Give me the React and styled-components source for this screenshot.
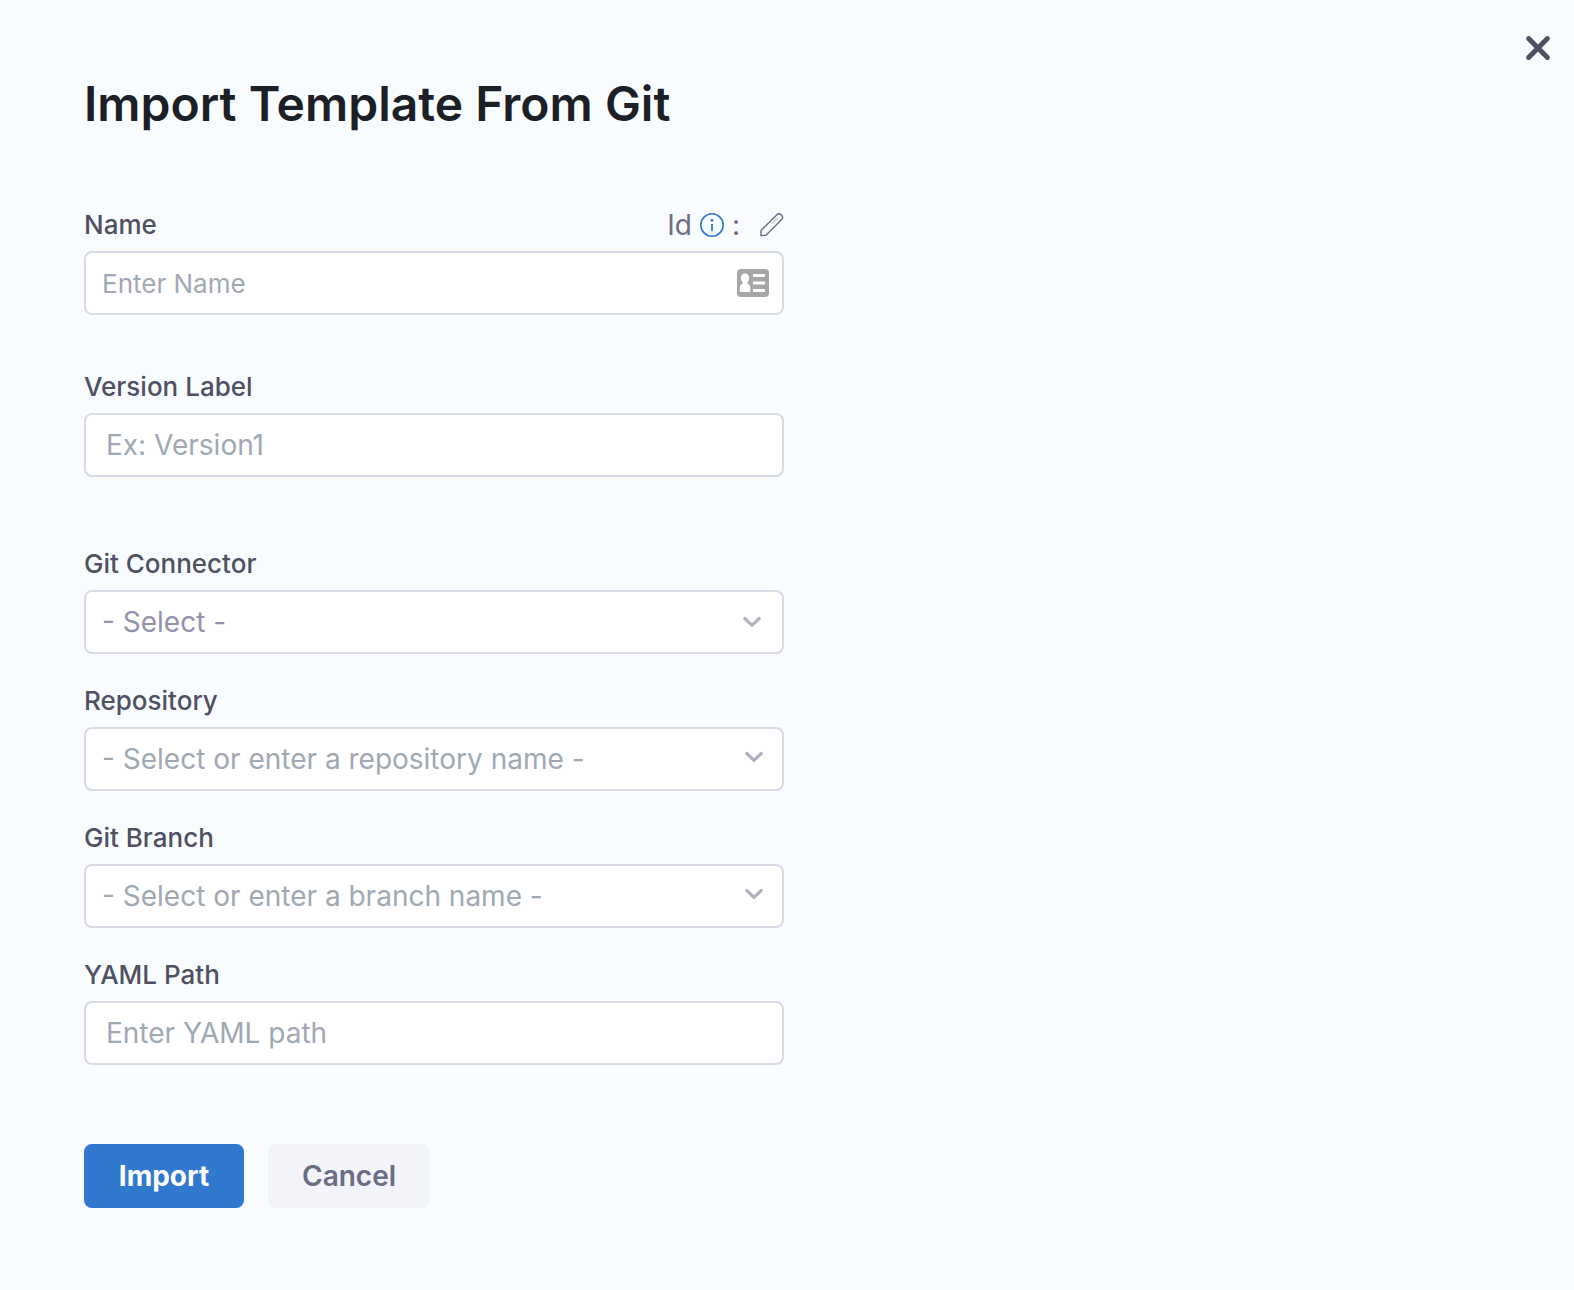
import React from "react";
import styled, { createGlobalStyle } from "styled-components";

const GlobalStyle = createGlobalStyle`
  *, *::before, *::after { box-sizing: border-box; }
  body {
    margin: 0;
    background: #f9fcff;
    color: #4f5162;
    font-family: Inter, "Liberation Sans", sans-serif;
  }
  input, select, button { font-family: inherit; }
`;

const Dialog = styled.main`
  display: flex;
  align-items: flex-start;
  justify-content: space-between;
  min-height: 100vh;
  padding: 32px 20px 32px 84px;
`;

const Content = styled.div`
  flex: 1;
  max-width: 700px;
  padding-top: 44px;
`;

const Title = styled.h1`
  margin: 0 0 77px;
  color: #1c1f26;
  font-size: 48px;
  font-weight: 600;
  line-height: 56px;
`;

const IconButton = styled.button`
  display: flex;
  padding: 0;
  border: 0;
  background: none;
  color: inherit;
  cursor: pointer;
`;

const Form = styled.form`
  display: flex;
  flex-direction: column;
`;

const Field = styled.div`
  display: flex;
  flex-direction: column;
  gap: 10px;
  margin-bottom: ${(p) => p.$space || 31}px;
`;

const FieldHead = styled.div`
  display: flex;
  align-items: center;
  justify-content: space-between;
  height: 32px;
`;

const Label = styled.label`
  font-size: 26px;
  font-weight: 500;
  line-height: 32px;
`;

const IdGroup = styled.div`
  display: flex;
  align-items: center;
  gap: 8px;
  color: #6b6d85;
  font-size: 28px;
  line-height: 32px;
`;

const IdEdit = styled(IconButton)`
  margin-left: 12px;
`;

const Shell = styled.div`
  display: grid;
  align-items: center;
  height: 64px;
  border: 2px solid #d9dae5;
  border-radius: 8px;
  background: #fff;
  overflow: hidden;

  & > * { grid-area: 1 / 1; }
  &:focus-within { border-color: #3178cf; }
`;

const TextBox = styled.input`
  width: 100%;
  height: 60px;
  padding: 0 ${(p) => p.$pad || 16}px;
  border: 0;
  outline: 0;
  background: transparent;
  color: #22272d;
  font-size: ${(p) => p.$size || 28}px;

  &::placeholder { color: #9fa9b3; opacity: 1; }
`;

const SelectBox = styled.select`
  width: 100%;
  height: 60px;
  padding: 0 16px;
  border: 0;
  outline: 0;
  appearance: none;
  background: transparent;
  color: #9293ab;
  font-size: 28px;
`;

const Adornment = styled.span`
  display: flex;
  justify-self: end;
  margin-right: ${(p) => p.$right}px;
  padding-bottom: ${(p) => p.$lift || 0}px;
  color: ${(p) => p.$color || "#b0b1c3"};
  pointer-events: none;
`;

const Actions = styled.div`
  display: flex;
  gap: 24px;
  margin-top: 48px;
`;

const Button = styled.button`
  min-width: 160px;
  height: 64px;
  padding: 0 34px;
  border: 0;
  border-radius: 8px;
  background: ${(p) => (p.$primary ? "#3178cf" : "#f3f3fa")};
  color: ${(p) => (p.$primary ? "#fff" : "#6b6d85")};
  font-size: 28px;
  font-weight: ${(p) => (p.$primary ? 700 : 600)};
  cursor: pointer;
`;

const Chevron = () => (
  <svg width="18" height="12" viewBox="0 0 18 12" fill="none" aria-hidden="true">
    <path d="M1.800 2.500 9 9.300l7.200-6.800" stroke="currentColor" strokeWidth="3.200" strokeLinecap="round" strokeLinejoin="round" />
  </svg>
);

const Cross = () => (
  <svg width="32" height="32" viewBox="0 0 32 32" fill="none" aria-hidden="true">
    <path d="M6.600 6.600l18.800 18.800M25.400 6.600 6.600 25.400" stroke="currentColor" strokeWidth="5" strokeLinecap="round" />
  </svg>
);

const Info = () => (
  <svg width="24" height="24" viewBox="0 0 24 24" fill="none" aria-hidden="true">
    <circle cx="12" cy="12" r="11.200" stroke="#3178cf" strokeWidth="1.600" />
    <circle cx="12" cy="7.300" r="1.400" fill="#3178cf" />
    <path d="M12 11v7" stroke="#3178cf" strokeWidth="1.800" />
  </svg>
);

const Pencil = () => (
  <svg width="24" height="24" viewBox="0 0 24 24" fill="none" aria-hidden="true">
    <path d="M1 22.600v-5L16.600 2a3.400 3.400 0 0 1 4.800 0 3.400 3.400 0 0 1 0 4.800L6 22.200Z" stroke="#6b6d85" strokeWidth="1.400" strokeLinejoin="round" />
    <path d="m12 10.500 5.500-5.500" stroke="#d5d6df" strokeWidth="2.400" />
  </svg>
);

const ContactCard = () => (
  <svg width="32" height="28" viewBox="0 0 32 28" aria-hidden="true">
    <rect width="32" height="28" rx="4" fill="currentColor" />
    <path d="M8 4.600c2.500 0 4.200 1.900 4.200 4.400 0 1.900-.7 3.400-1.800 4.300v1.200c2 .7 2.900 2 2.900 4.500v4H2.800v-4c0-2.500.9-3.800 2.900-4.500v-1.200C4.600 12.400 3.800 10.900 3.800 9c0-2.500 1.700-4.400 4.200-4.400Z" fill="#fff" />
    <path d="M16 6.500h12M16 14h12M16 21.500h12" stroke="#fff" strokeWidth="3" />
  </svg>
);

export default function App() {
  return (
    <>
      <GlobalStyle />
      <Dialog>
        <Content>
          <Title>Import Template From Git</Title>
          <Form onSubmit={(e) => e.preventDefault()}>
            <Field $space={56}>
              <FieldHead>
                <Label htmlFor="name">Name</Label>
                <IdGroup>
                  <span>Id</span>
                  <Info />
                  <span>:</span>
                  <IdEdit type="button" aria-label="Edit Id">
                    <Pencil />
                  </IdEdit>
                </IdGroup>
              </FieldHead>
              <Shell>
                <TextBox id="name" $size={26} placeholder="Enter Name" />
                <Adornment $right={13} $color="#a6a6a6">
                  <ContactCard />
                </Adornment>
              </Shell>
            </Field>
            <Field $space={71}>
              <Label htmlFor="version">Version Label</Label>
              <Shell>
                <TextBox id="version" $pad={20} placeholder="Ex: Version1" />
              </Shell>
            </Field>
            <Field>
              <Label htmlFor="connector">Git Connector</Label>
              <Shell>
                <SelectBox id="connector" defaultValue="">
                  <option value="">- Select -</option>
                </SelectBox>
                <Adornment $right={21}>
                  <Chevron />
                </Adornment>
              </Shell>
            </Field>
            <Field>
              <Label htmlFor="repository">Repository</Label>
              <Shell>
                <TextBox id="repository" role="combobox" aria-expanded="false" placeholder="- Select or enter a repository name -" />
                <Adornment $right={19} $lift={4}>
                  <Chevron />
                </Adornment>
              </Shell>
            </Field>
            <Field>
              <Label htmlFor="branch">Git Branch</Label>
              <Shell>
                <TextBox id="branch" role="combobox" aria-expanded="false" placeholder="- Select or enter a branch name -" />
                <Adornment $right={19} $lift={4}>
                  <Chevron />
                </Adornment>
              </Shell>
            </Field>
            <Field>
              <Label htmlFor="path">YAML Path</Label>
              <Shell>
                <TextBox id="path" $pad={20} placeholder="Enter YAML path" />
              </Shell>
            </Field>
            <Actions>
              <Button type="submit" $primary>Import</Button>
              <Button type="button">Cancel</Button>
            </Actions>
          </Form>
        </Content>
        <IconButton type="button" aria-label="Close">
          <Cross />
        </IconButton>
      </Dialog>
    </>
  );
}
